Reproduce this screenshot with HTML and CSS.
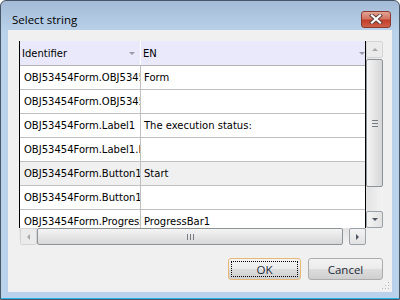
FILE: index.html
```html
<!DOCTYPE html>
<html>
<head>
  <meta charset="utf-8">
  <title>Select string</title>
  <link rel="stylesheet" href="styles.css">
</head>
<body>

<div class="window">
  <div class="titlebar">
    <span class="title">Select string</span>
    <span class="close">
      <svg width="14" height="10" viewBox="0 0 14 10">
        <path d="M3 1.5 L11 8.5 M11 1.5 L3 8.5" stroke="#5a3a36" stroke-width="4" stroke-linecap="square"/>
        <path d="M3 1.5 L11 8.5 M11 1.5 L3 8.5" stroke="#ffffff" stroke-width="2.2" stroke-linecap="square"/>
      </svg>
    </span>
  </div>

  <div class="client">
    <div class="grid">
      <div class="table-view">
        <div class="row head">
          <div class="cell">Identifier<span class="sort"></span></div>
          <div class="cell">EN<span class="sort"></span></div>
        </div>
        <div class="row">
          <div class="cell">OBJ53454Form.OBJ53454Form</div>
          <div class="cell">Form</div>
        </div>
        <div class="row">
          <div class="cell">OBJ53454Form.OBJ53454Form</div>
          <div class="cell"></div>
        </div>
        <div class="row">
          <div class="cell">OBJ53454Form.Label1</div>
          <div class="cell">The execution status:</div>
        </div>
        <div class="row">
          <div class="cell">OBJ53454Form.Label1.Hint</div>
          <div class="cell"></div>
        </div>
        <div class="row current">
          <div class="cell">OBJ53454Form.Button1</div>
          <div class="cell">Start</div>
        </div>
        <div class="row">
          <div class="cell">OBJ53454Form.Button1.Hint</div>
          <div class="cell"></div>
        </div>
        <div class="row">
          <div class="cell">OBJ53454Form.ProgressBar1</div>
          <div class="cell">ProgressBar1</div>
        </div>
      </div>

      <div class="vscroll">
        <span class="sbtn off"><span class="tri up"></span></span>
        <span class="thumb v"><span class="lines-h"></span></span>
        <span class="track"></span>
        <span class="sbtn"><span class="tri down"></span></span>
      </div>

      <div class="hscroll">
        <span class="sbtn off"><span class="tri left"></span></span>
        <span class="thumb h"><span class="lines-v"></span></span>
        <span class="track"></span>
        <span class="sbtn"><span class="tri right"></span></span>
      </div>

      <div class="corner"></div>
    </div>

    <div class="buttons">
      <span class="btn default"><span class="focus">OK</span></span>
      <span class="btn cancel">Cancel</span>
    </div>

    <svg class="grip" width="8" height="8" viewBox="0 0 8 8">
      <rect x="6" y="0" width="1" height="1" fill="#b8b8b8"/>
      <rect x="3" y="3" width="1" height="1" fill="#b8b8b8"/>
      <rect x="6" y="3" width="1" height="1" fill="#b8b8b8"/>
      <rect x="0" y="6" width="1" height="1" fill="#b8b8b8"/>
      <rect x="3" y="6" width="1" height="1" fill="#b8b8b8"/>
      <rect x="6" y="6" width="1" height="1" fill="#b8b8b8"/>
    </svg>
  </div>
</div>

</body>
</html>
```

FILE: styles.css
```css
body {
margin: 0;
background: #ffffff;
}
.window { width: 400px;
height: 300px;
box-sizing: border-box;
border: 1px solid #4a5565;
border-radius: 6px 6px 0 0;
background: linear-gradient(#a3bbd6, #bad1ea 30px, #b9d1ea);
box-shadow: inset 0 -1px 0 #2fb4e6;
padding: 0 7px 7px 7px;
display: flex;
flex-direction: column;
}
.titlebar { height: 29px;
box-sizing: border-box;
padding: 9px 0 2px 4px;
display: flex;
align-items: center;
justify-content: space-between;
}
.title { font-family: "Open Sans", "Noto Sans", sans-serif;
font-size: 11.5px;
color: #000000;
}
.close { width: 30px;
height: 17px;
box-sizing: border-box;
border: 1px solid #8c3a30;
border-radius: 3px;
background: linear-gradient(#e2a596, #d47361 45%, #c23f2a 55%, #d0604a);
display: flex;
align-items: center;
justify-content: center;
margin-right: 1px;
}
.client { flex: 1;
background: #f0f0f0;
padding: 11px 9px 0 11px;
position: relative;
}
.grid { display: grid;
grid-template-columns: 347px 17px;
grid-template-rows: 187px 17px;
height: 204px;
}
.table-view { border-left: 1px solid #000000;
border-right: 1px solid #000000;
background: #ffffff;
overflow: hidden;
font-family: "DejaVu Sans", sans-serif;
font-size: 10px;
color: #000000;
}
.row { display: grid;
grid-template-columns: 121px 1fr;
height: 24px;
box-sizing: border-box;
border-bottom: 1px solid #c0c0c0;
}
.row.head { height: 25px;
background: #e9e9fb;
border-bottom-color: #b4b4b8;
}
.row.current { background: #f0f0f0;
}
.cell { border-right: 1px solid #c0c0c0;
padding-left: 4px;
white-space: nowrap;
overflow: hidden;
display: flex;
align-items: center;
position: relative;
}
.cell + .cell { border-right: none;
padding-left: 3px;
}
.head .cell { padding-left: 2px;
border-right-color: #ffffff;
}
.head .cell + .cell { border-right: none;
}
.sort { position: absolute;
right: 5px;
top: 11px;
border-left: 3px solid transparent;
border-right: 3px solid transparent;
border-top: 3px solid #9a9aa4;
}
.head .cell + .cell .sort { right: 0;
}
.vscroll { display: flex;
flex-direction: column;
background: linear-gradient(to right, #e2e2e2, #f3f3f3);
}
.hscroll { display: flex;
padding-left: 1px;
background: linear-gradient(#e2e2e2, #f3f3f3);
}
.corner { background: #f0f0f0;
}
.sbtn { flex: none;
width: 17px;
height: 17px;
box-sizing: border-box;
border: 1px solid #9ba1a9;
border-radius: 2px;
background: linear-gradient(to right, #f3f3f3, #e2e2e2);
display: flex;
align-items: center;
justify-content: center;
}
.hscroll .sbtn { width: 17px;
background: linear-gradient(#f3f3f3, #e2e2e2);
}
.sbtn.off { border-color: #d4d4d4;
background: #ebebeb;
}
.tri { width: 0;
height: 0;
}
.tri.up { border-left: 3px solid transparent;
border-right: 3px solid transparent;
border-bottom: 3px solid #a8a8a8;
}
.tri.down { border-left: 3px solid transparent;
border-right: 3px solid transparent;
border-top: 3px solid #4c5560;
}
.tri.left { border-top: 3px solid transparent;
border-bottom: 3px solid transparent;
border-right: 3px solid #a8a8a8;
}
.tri.right { border-top: 3px solid transparent;
border-bottom: 3px solid transparent;
border-left: 3px solid #4c5560;
}
.thumb { box-sizing: border-box;
border: 1px solid #8e9398;
border-radius: 2px;
display: flex;
align-items: center;
justify-content: center;
}
.thumb.v { height: 128px;
margin-top: 1px;
background: linear-gradient(to right, #f4f4f4, #e6e6e6 50%, #d6d6d6);
}
.thumb.h { width: 306px;
background: linear-gradient(#f4f4f4, #e6e6e6 50%, #d6d6d6);
}
.track { flex: 1;
}
.lines-h { width: 6px;
height: 5px;
border-top: 1px solid #777c82;
border-bottom: 1px solid #777c82;
position: relative;
}
.lines-h::after { content: "";
position: absolute;
left: 0;
right: 0;
top: 2px;
border-top: 1px solid #777c82;
}
.lines-v { width: 5px;
height: 6px;
border-left: 1px solid #777c82;
border-right: 1px solid #777c82;
position: relative;
}
.lines-v::after { content: "";
position: absolute;
top: 0;
bottom: 0;
left: 2px;
border-left: 1px solid #777c82;
}
.buttons { display: flex;
justify-content: flex-end;
gap: 7px;
margin-top: 13px;
}
.btn { height: 22px;
box-sizing: border-box;
border: 1px solid #acacac;
border-radius: 3px;
background: linear-gradient(#f3f3f3, #ebebeb 50%, #dddddd 51%, #cfcfcf);
font-family: "Open Sans", "Noto Sans", sans-serif;
font-size: 11.5px;
color: #1e2a3a;
display: flex;
align-items: center;
justify-content: center;
}
.btn.default { width: 73px;
border-color: #e8b878;
padding: 2px;
}
.btn.cancel { width: 75px;
}
.focus { flex: 1;
align-self: stretch;
border: 1px dotted #000000;
display: flex;
align-items: center;
justify-content: center;
}
.grip { position: absolute;
right: 2px;
bottom: 2px;
}
```
